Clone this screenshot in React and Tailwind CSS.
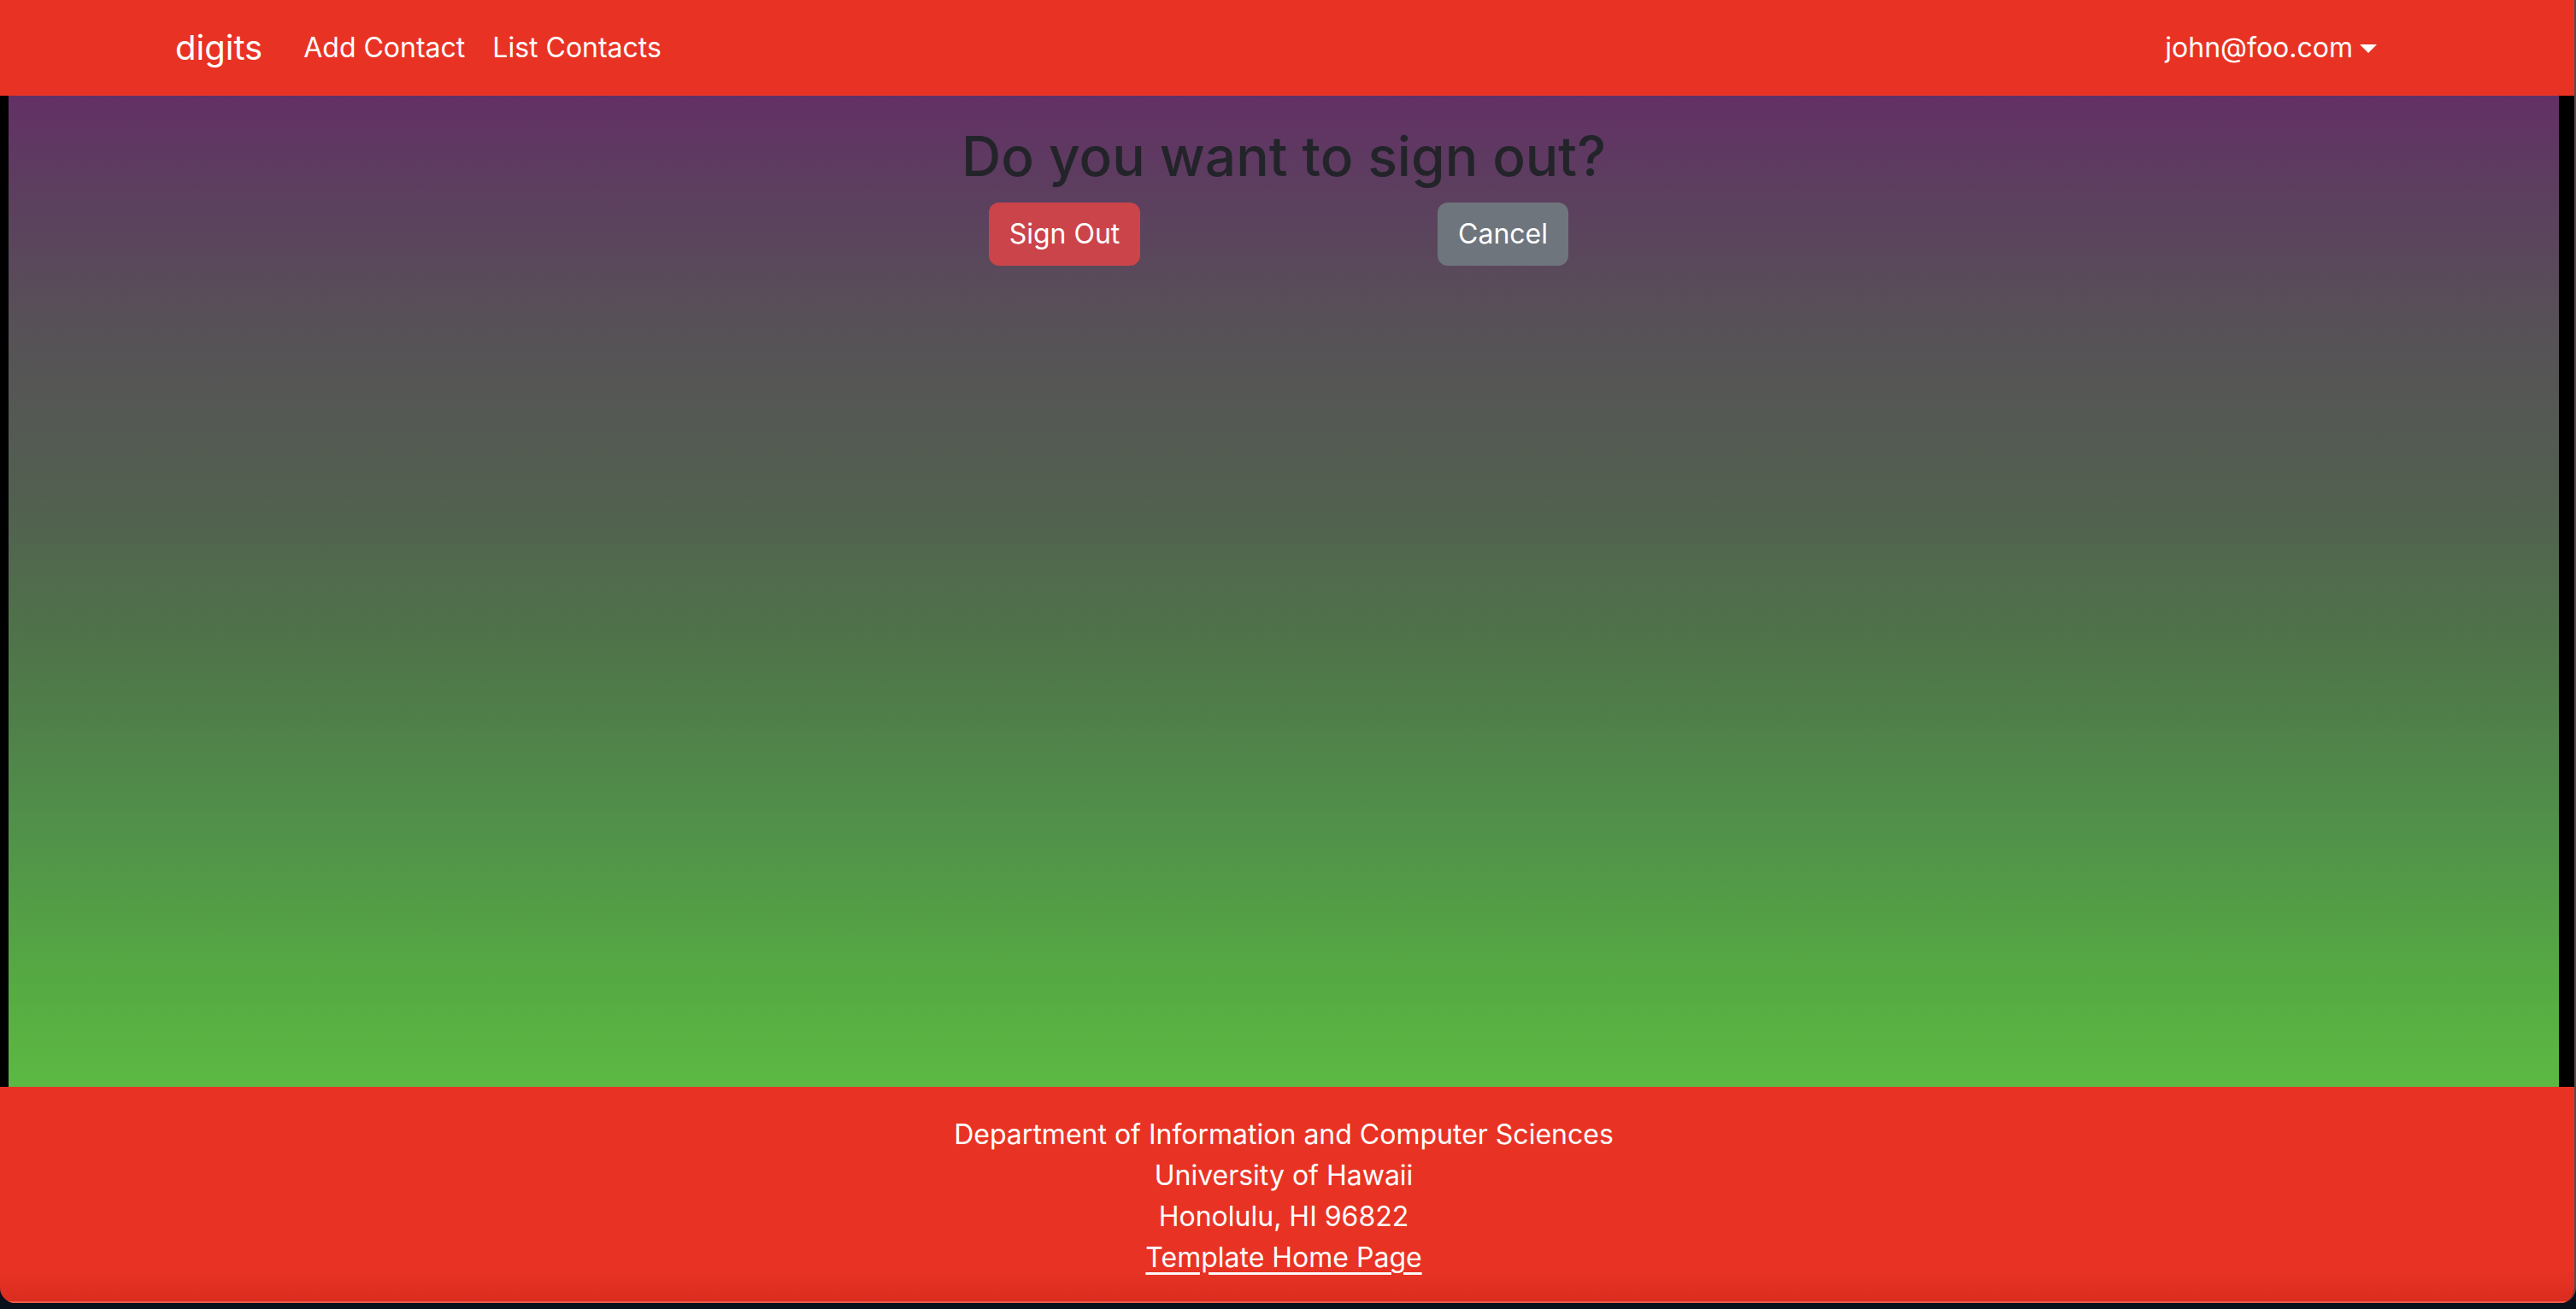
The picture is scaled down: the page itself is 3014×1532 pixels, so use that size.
import React from "react";

export default function App() {
  const font = { fontFamily: "Inter, 'Noto Sans', 'Liberation Sans', sans-serif" };
  return (
    <div className="w-[3014px] h-[1532px] bg-[#0a0f1c] overflow-hidden" style={font}>
      <div className="w-[3014px] h-[1525px] flex flex-col rounded-b-[18px] overflow-hidden border-r-2 border-r-[#5a4a4a]">
        {/* Navbar */}
        <nav className="h-[112px] bg-[#e83324] shrink-0">
          <div className="w-[2640px] ml-[181px] px-[24px] h-full flex items-center justify-between">
            <div className="flex items-center">
              <span className="text-white text-[40px] leading-[60px] mr-[32px]">digits</span>
              <span className="text-white text-[32px] leading-[48px] px-[16px]">Add Contact</span>
              <span className="text-white text-[32px] leading-[48px] px-[16px]">List Contacts</span>
            </div>
            <div className="flex items-center px-[16px]">
              <span className="text-white text-[32px] leading-[48px]">john@foo.com</span>
              <span className="ml-[8px] mt-[2px] w-0 h-0 border-t-[10px] border-t-white border-l-[10px] border-l-transparent border-r-[10px] border-r-transparent" />
            </div>
          </div>
        </nav>

        {/* Main */}
        <main className="h-[1160px] shrink-0 bg-black flex pl-[10px] pr-[18px] overflow-hidden">
          <div className="flex-1 bg-[linear-gradient(to_bottom,#633066_0%,#5d3c60_8%,#575257_24%,#525f50_40%,#4f7649_57%,#51914a_74%,#56ab42_90%,#5cb943_100%)] shadow-[0_0_8px_2px_rgba(0,0,0,0.85)] pt-[32px]">
            <h2 className="text-center text-[64px] leading-[77px] font-medium text-[#23242a] mb-[16px]">
              Do you want to sign out?
            </h2>
            <div className="w-[1026px] mx-auto flex">
              <div className="flex-1 flex justify-center">
                <button className="h-[74px] px-[24px] rounded-[12px] bg-[#cb444a] text-white text-[32px] leading-[48px]">
                  Sign Out
                </button>
              </div>
              <div className="flex-1 flex justify-center">
                <button className="h-[74px] px-[24px] rounded-[12px] bg-[#6e757c] text-white text-[32px] leading-[48px]">
                  Cancel
                </button>
              </div>
            </div>
          </div>
        </main>

        {/* Footer */}
        <footer className="flex-1 relative bg-[#e83324] text-white text-center text-[32px] leading-[48px] pt-[32px] pr-[8px]">
          <div>Department of Information and Computer Sciences</div>
          <div>University of Hawaii</div>
          <div>Honolulu, HI 96822</div>
          <div>
            <a className="underline underline-offset-[6px]" href="#">Template Home Page</a>
          </div>
          <div className="absolute left-0 right-0 bottom-0 h-[40px] bg-[linear-gradient(to_bottom,rgba(150,20,10,0),rgba(150,20,10,0.18))]" />
          <div className="absolute left-0 right-0 bottom-0 h-[2px] bg-[#ef5b4c]" />
        </footer>
      </div>
    </div>
  );
}
